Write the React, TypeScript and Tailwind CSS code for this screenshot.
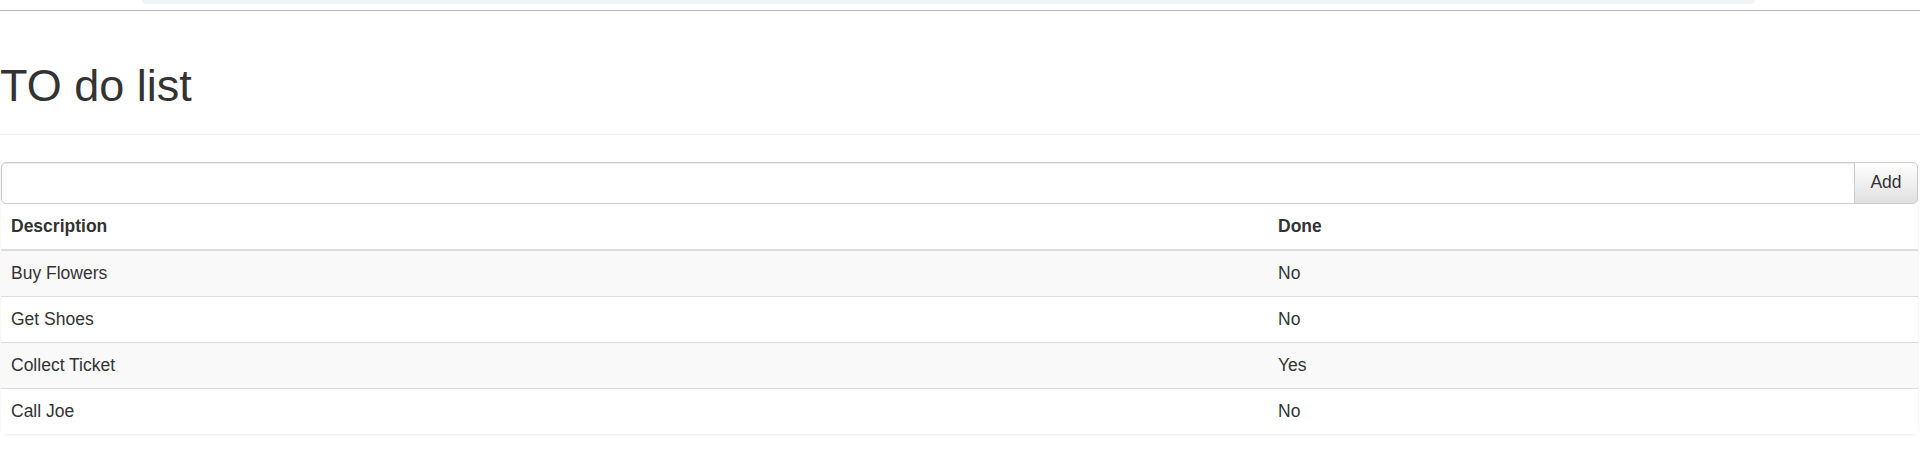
import { useState } from "react";

type Todo = { description: string; done: boolean };

const INITIAL_TODOS: Todo[] = [
  { description: "Buy Flowers", done: false },
  { description: "Get Shoes", done: false },
  { description: "Collect Ticket", done: true },
  { description: "Call Joe", done: false },
];

export default function App() {
  const [todos, setTodos] = useState<Todo[]>(INITIAL_TODOS);
  const [text, setText] = useState("");

  const addTodo = () => {
    if (!text.trim()) return;
    setTodos([...todos, { description: text.trim(), done: false }]);
    setText("");
  };

  return (
    <div className="min-h-[451px] bg-white font-['Liberation_Sans',Arial,sans-serif] text-[17.5px] text-[#333]">
      {/* top strip */}
      <div className="h-[10px]">
        <div className="ml-[142px] h-[4px] w-[1613px] rounded-b-md bg-[#f1f2f4]" />
      </div>
      <div className="border-t border-[#b5b5b5]" />

      <div className="border-b border-[#eee] pt-[50px] pb-[23px]">
        <h1 className="text-[45px] leading-[49.5px] font-normal">TO do list</h1>
      </div>

      <div className="mt-[27px] mr-[2px] ml-px rounded-b-md shadow-[0_1px_3px_rgba(0,0,0,0.08)]">
        <div className="flex h-[42px]">
          <input
            value={text}
            onChange={(e) => setText(e.target.value)}
            className="h-full flex-1 rounded-l-[5px] border border-[#ccc] px-[15px] shadow-[inset_0_1px_1px_rgba(0,0,0,0.075)] outline-none"
          />
          <button
            type="button"
            onClick={addTodo}
            className="-ml-px h-full w-[64px] rounded-r-[5px] border border-[#ccc] bg-gradient-to-b from-white to-[#e0e0e0] text-[17.5px] text-[#333]"
          >
            Add
          </button>
        </div>

        <table className="w-full table-fixed border-collapse">
          <thead>
            <tr>
              <th className="w-[1267px] border-b-2 border-[#ddd] px-[10px] py-[10px] text-left leading-[25px] font-bold">
                Description
              </th>
              <th className="border-b-2 border-[#ddd] px-[10px] py-[10px] text-left leading-[25px] font-bold">
                Done
              </th>
            </tr>
          </thead>
          <tbody>
            {todos.map((t, i) => (
              <tr key={t.description + i} className={i % 2 === 0 ? "bg-[#f9f9f9]" : "bg-white"}>
                <td className="border-t border-[#ddd] px-[10px] py-[10px] leading-[25px]">{t.description}</td>
                <td className="border-t border-[#ddd] px-[10px] py-[10px] leading-[25px]">{t.done ? "Yes" : "No"}</td>
              </tr>
            ))}
          </tbody>
        </table>
      </div>
    </div>
  );
}
